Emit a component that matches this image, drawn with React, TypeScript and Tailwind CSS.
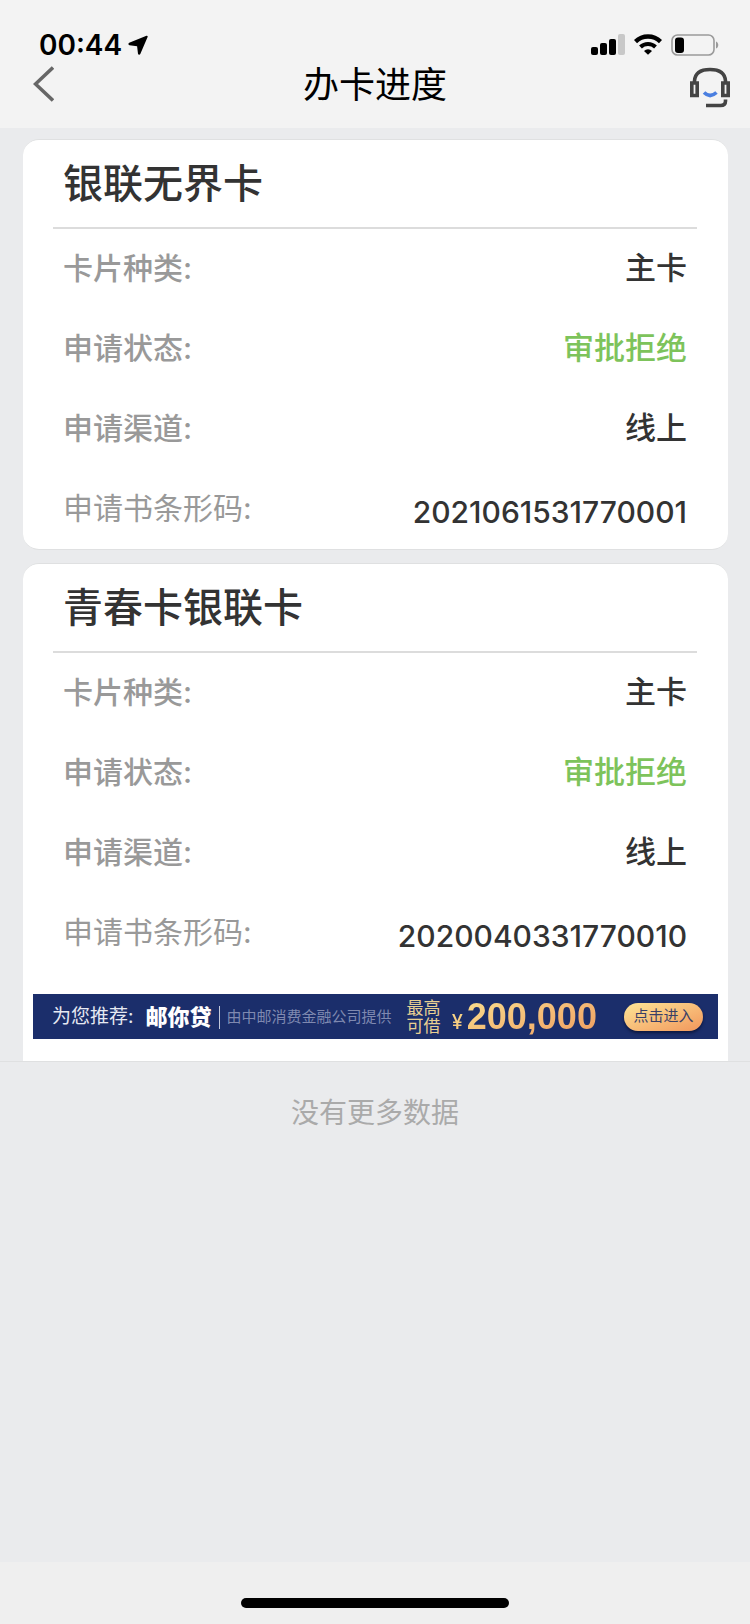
type Application = {
  name: string;
  kind: string;
  status: string;
  channel: string;
  barcode: string;
};

const applications: Application[] = [
  { name: "银联无界卡", kind: "主卡", status: "审批拒绝", channel: "线上", barcode: "2021061531770001" },
  { name: "青春卡银联卡", kind: "主卡", status: "审批拒绝", channel: "线上", barcode: "2020040331770010" },
];

function StatusBar() {
  return (
    <div className="flex h-15 items-center justify-between pt-[30px] pr-[31px] pl-[39px]">
      <div className="flex items-center gap-1.5">
        <span className="text-[28px] leading-[30px] font-semibold text-black">00:44</span>
        <svg className="h-5 w-5" viewBox="0 0 20 20">
          <path d="M18.500.8 1.200 7.700c-1.100.500-1 2.300.3 2.500l7.600 1 .900 7.600c.2 1.300 1.800 1.400 2.300.3L19.600 1.900c.3-.8-.3-1.400-1.100-1.100z" />
        </svg>
      </div>
      <div className="flex items-center gap-[9px]">
        <svg className="h-[22px] w-[34px]" viewBox="0 0 34 22">
          <rect x="0" y="13" width="7" height="8" rx="2" />
          <rect x="9" y="9" width="7" height="12" rx="2" />
          <rect x="18" y="5" width="7" height="16" rx="2" />
          <rect x="27" y="0" width="7" height="21" rx="2" fill="#c8c8c8" />
        </svg>
        <svg className="h-[22px] w-7" viewBox="0 0 28 22">
          <path d="M1.500 7.600a18 18 0 0 1 25 0" fill="none" stroke="#000" strokeWidth="4.400" />
          <path d="M6.500 13a10.800 10.800 0 0 1 15 0" fill="none" stroke="#000" strokeWidth="4" />
          <path d="M14 20.800 10 16.900a5.800 5.800 0 0 1 8 0z" />
        </svg>
        <svg className="h-[22px] w-12" viewBox="0 0 48 22">
          <rect x="1" y="1" width="42" height="20" rx="5.500" fill="none" stroke="#9a9a9a" strokeWidth="1.600" />
          <rect x="4" y="3.500" width="9" height="15.500" rx="3" />
          <path d="M45 7.500c3 1 3 6 0 7z" fill="#9a9a9a" />
        </svg>
      </div>
    </div>
  );
}

function NavBar() {
  return (
    <div className="grid h-[68px] grid-cols-[1fr_auto_1fr] px-5 pb-[18px]">
      <button type="button" aria-label="返回" className="flex h-12 items-center justify-self-start px-[13px]">
        <svg className="h-9 w-[21px]" viewBox="0 0 21 36" fill="none" stroke="#666" strokeWidth="3.600">
          <path d="M20 1.500 2.500 18 20 34.500" />
        </svg>
      </button>
      <h1 className="text-[36px] leading-[50px] text-black">办卡进度</h1>
      <button type="button" aria-label="客服" className="flex h-12 items-end justify-self-end">
        <svg className="h-[41px] w-10" viewBox="0 0 40 41" fill="none" stroke="#444" strokeWidth="3.600">
          <path d="M4.500 15v-1C5 6 11 2.500 20 2.500s15 3.500 15.500 11.500v1" />
          <path d="M1.800 16h5.400v12.500H1.800z" />
          <path d="M32.800 16h5.400v12.500h-5.400z" />
          <path d="M35.500 32.500v1.500q0 4.500-5 4.500H16" />
          <path d="M14 25.500q6 6 12.500 0" stroke="#4a7fe0" />
        </svg>
      </button>
    </div>
  );
}

function Row({ label, value, labelClass, valueClass }: { label: string; value: string; labelClass: string; valueClass: string }) {
  return (
    <div className="flex h-20 items-center justify-between pb-0.5">
      <dt className={`text-[30px] leading-[42px] text-[#999] ${labelClass}`}>{label}:</dt>
      <dd className={`leading-[42px] font-medium ${valueClass}`}>{value}</dd>
    </div>
  );
}

function ApplicationDetails({ item }: { item: Application }) {
  return (
    <>
      <h2 className="h-[87px] px-10 text-[40px] leading-[87px] font-medium text-[#333]">{item.name}</h2>
      <hr className="mr-[31px] ml-[30px] border-t-2 border-[#dcdcdc]" />
      <dl className="pr-[41px] pl-10">
        <Row label="卡片种类" value={item.kind} labelClass="font-medium" valueClass="text-[31px] text-[#333]" />
        <Row label="申请状态" value={item.status} labelClass="font-medium" valueClass="text-[31px] text-[#7dc35b]" />
        <Row label="申请渠道" value={item.channel} labelClass="font-medium" valueClass="text-[31px] text-[#333]" />
        <Row label="申请书条形码" value={item.barcode} labelClass="" valueClass="pt-2 text-[30px] text-[#333]" />
      </dl>
    </>
  );
}

function LoanBanner() {
  return (
    <div className="mx-[10px] mt-[21px] mb-[22px] flex h-[45px] items-center justify-between bg-[#1b2e6b] pr-[15px] pl-[19px] whitespace-nowrap">
      <div className="flex items-center pt-0.5">
        <span className="text-[19px] text-[#e6e9f2]">为您推荐:</span>
        <strong className="ml-3 text-[22px] font-black text-white">邮你贷</strong>
        <span className="mx-[7px] h-[23px] w-px bg-[#c3c9dc]" />
        <span className="text-[15px] text-[#7f89b0]">由中邮消费金融公司提供</span>
      </div>
      <span className="ml-1 w-[34px] text-[17px] leading-[18px] whitespace-normal text-[#e8cf92]">最高可借</span>
      <div className="flex items-baseline gap-1 bg-linear-to-br from-[#fbe995] to-[#ee9f62] to-90% bg-clip-text pt-[6px] text-transparent">
        <span className="text-[20px] leading-[40px] font-medium">¥</span>
        <span className="font-['Liberation_Sans'] text-[36px] leading-[40px] font-bold">200,000</span>
      </div>
      <button
        type="button"
        className="ml-4 h-7 w-[79px] rounded-full bg-linear-to-br from-[#fce596] to-[#f0965c] text-[15px] text-[#3a3f66] shadow-[0_2px_3px_#0c173f]"
      >
        点击进入
      </button>
    </div>
  );
}

export default function App() {
  const [first, second] = applications;

  return (
    <div className="flex min-h-screen flex-col bg-[#eaebed] font-[Inter,'Noto_Sans_CJK_SC',sans-serif]">
      <header className="bg-[#f3f3f3]">
        <StatusBar />
        <NavBar />
      </header>

      <main className="flex-1">
        <div className="flex flex-col gap-[13px] pt-[11px] pr-[22px] pl-[23px]">
          <section className="rounded-[16px] border-y border-[#dfe0e1] bg-white">
            <ApplicationDetails item={first} />
          </section>
          <section className="rounded-t-[16px] border-t border-[#dfe0e1] bg-white">
            <ApplicationDetails item={second} />
            <LoanBanner />
          </section>
        </div>
        <p className="border-t border-[#dfe0e1] pt-[31px] text-center text-[28px] leading-[40px] text-[#aaa]">没有更多数据</p>
      </main>

      {/* Home indicator */}
      <footer className="flex h-[62px] items-end justify-center bg-[#efefef] pb-4">
        <div className="h-[10px] w-[268px] rounded-full bg-black" />
      </footer>
    </div>
  );
}
